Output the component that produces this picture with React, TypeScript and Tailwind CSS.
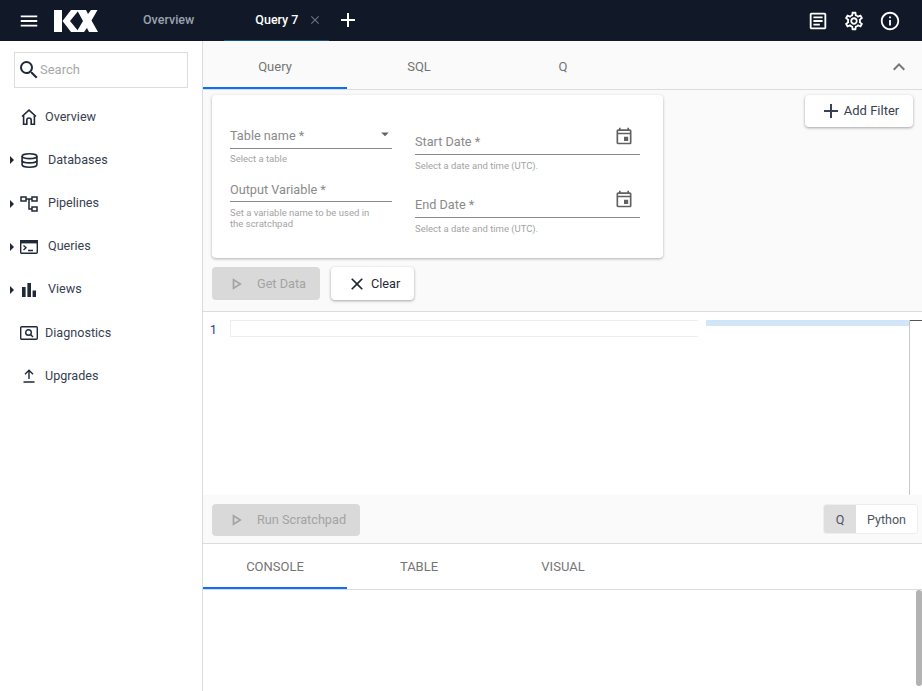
import {
  MdAdd,
  MdArrowDropDown,
  MdClose,
  MdExpandLess,
  MdMenu,
  MdOutlineArticle,
  MdOutlineEvent,
  MdOutlineInfo,
  MdOutlinePlayArrow,
  MdOutlineSettings,
  MdSearch,
} from "react-icons/md";
import type { ReactNode } from "react";

function KxLogo() {
  return (
    <svg width="44" height="22" viewBox="0 0 44 22" fill="#fff">
      <rect x="0" y="0" width="8" height="22" />
      <polygon points="17,0 25,0 16,11 25,22 17,22 8.5,11" />
      <polygon points="23,0 32,0 34,4 37,0 43.5,0 37.5,10.5 44,22 35,22 33,18 30,22 22.5,22 29,11" />
    </svg>
  );
}

function HomeIcon() {
  return (
    <svg width="16" height="16" viewBox="0 0 16 16" fill="none" stroke="#1f2937" strokeWidth="1.6">
      <path d="M1 7.5L8 1.2l7 6.3" />
      <path d="M2.6 6.5v8.7h3.2v-4a2.2 2.2 0 0 1 4.4 0v4h3.2V6.5" />
    </svg>
  );
}

function DatabaseIcon() {
  return (
    <svg width="17" height="15" viewBox="0 0 17 15" fill="none" stroke="#1f2937" strokeWidth="1.6">
      <ellipse cx="8.5" cy="3.2" rx="7.4" ry="2.4" />
      <path d="M1.1 3.2v8.6c0 1.3 3.3 2.4 7.4 2.4s7.4-1.1 7.4-2.4V3.2" />
      <path d="M1.1 7.5c0 1.3 3.3 2.4 7.4 2.4s7.4-1.1 7.4-2.4" />
    </svg>
  );
}

function PipelineIcon() {
  return (
    <svg width="18" height="16" viewBox="0 0 18 16" fill="none" stroke="#1f2937" strokeWidth="1.5">
      <rect x="1" y="1" width="5" height="4" />
      <rect x="12" y="1" width="5" height="4" />
      <rect x="12" y="11" width="5" height="4" />
      <path d="M6 3h6M9 3v10h3" />
    </svg>
  );
}

function TerminalIcon() {
  return (
    <svg width="18" height="14" viewBox="0 0 18 14" fill="none" stroke="#1f2937" strokeWidth="1.4">
      <rect x="0.7" y="0.7" width="16.6" height="12.6" rx="1" />
      <rect x="0.7" y="0.7" width="16.6" height="2" fill="#1f2937" />
      <path d="M3.5 5.5l2.5 2.3-2.5 2.3M8 10.5h5" />
    </svg>
  );
}

function ViewsIcon() {
  return (
    <svg width="14" height="14" viewBox="0 0 14 14" fill="#1f2937">
      <rect x="0" y="4" width="3.6" height="10" />
      <rect x="5.4" y="0" width="3.6" height="14" />
      <rect x="10.6" y="7.5" width="3.4" height="6.5" />
    </svg>
  );
}

function DiagnosticsIcon() {
  return (
    <svg width="18" height="14" viewBox="0 0 18 14" fill="none" stroke="#1f2937" strokeWidth="1.4">
      <rect x="0.7" y="0.7" width="16.6" height="12.6" rx="1" />
      <circle cx="8.5" cy="6.5" r="2.8" />
      <path d="M10.5 8.5l2.5 2.5" />
    </svg>
  );
}

function UploadIcon() {
  return (
    <svg width="12" height="14" viewBox="0 0 12 14" fill="none" stroke="#1f2937" strokeWidth="1.4">
      <path d="M6 10V1.5M2 5.3l4-4 4 4M0.5 13h11" />
    </svg>
  );
}

function NavItem({
  icon,
  label,
  caret,
}: {
  icon: ReactNode;
  label: string;
  caret?: boolean;
}) {
  return (
    <div className="flex h-[43.2px] items-center text-[12.6px] text-[#374151]">
      <span className="flex w-[20px] justify-end pr-[6.5px]">
        {caret ? (
          <span className="h-0 w-0 border-y-[4.5px] border-l-[4px] border-y-transparent border-l-[#1f2937]" />
        ) : null}
      </span>
      <span className="flex w-[18px] justify-center">{icon}</span>
      <span className={caret ? "ml-[10px]" : "ml-[7px]"}>{label}</span>
    </div>
  );
}

function Hint({ children }: { children: ReactNode }) {
  return <p className="mt-[4px] w-[145px] text-[9.5px] leading-[11px] text-[#a3a3a3]">{children}</p>;
}

function DateField({ label }: { label: string }) {
  return (
    <div className="h-[63px] w-[225px]">
      <div className="flex h-[37px] items-end justify-between border-b border-[#8a8a8a] pb-[3px]">
        <span className="text-[12.7px] leading-[18px] text-[#8a8a8a]">{label}</span>
        <MdOutlineEvent className="mb-[5px] mr-[6px] text-[#616161]" size={20} />
      </div>
      <p className="mt-[5px] text-[9.5px] leading-[11px] text-[#a3a3a3]">
        Select a date and time (UTC).
      </p>
    </div>
  );
}

function TabRow({
  tabs,
  className,
}: {
  tabs: string[];
  className: string;
}) {
  return (
    <div className="flex h-full">
      {tabs.map((t, i) => (
        <div
          key={t}
          className={`flex w-[144px] items-center justify-center text-[13px] text-[#757575] ${className} ${
            i === 0 ? "shadow-[inset_0_-2px_0_#0d6efd]" : ""
          }`}
        >
          {t}
        </div>
      ))}
    </div>
  );
}

export default function App() {
  return (
    <div className="flex h-[691px] w-[922px] flex-col overflow-hidden bg-white font-['Roboto',sans-serif]">
      <header className="flex h-[41px] shrink-0 items-center bg-[#111827] text-white">
        <MdMenu className="ml-[18px]" size={22} />
        <div className="ml-[14px] flex">
          <KxLogo />
        </div>
        <span className="ml-[45px] text-[12.5px] font-medium text-[#9ca3af]">Overview</span>
        <div className="ml-[30px] flex h-[40px] w-[105px] items-center border-b border-[#14508f] pl-[31px]">
          <span className="text-[12.5px] font-medium">Query 7</span>
          <MdClose className="ml-[10px] text-[#6b7280]" size={14} />
        </div>
        <MdAdd className="ml-[7px] mt-[-1px]" size={24} />
        <div className="ml-auto mr-[21px] flex items-center gap-[14px]">
          <MdOutlineArticle size={22} />
          <MdOutlineSettings size={22} />
          <MdOutlineInfo size={22} />
        </div>
      </header>

      <div className="flex min-h-0 flex-1">
        <aside className="w-[203px] shrink-0 border-r border-[#dcdcdc] bg-white">
          <div className="mx-[14px] mt-[11px] flex h-[36px] w-[174px] items-center border border-[#dcdcdc] pl-[2px]">
            <MdSearch className="text-[#1f2937]" size={24} />
            <span className="ml-[-1px] text-[13px] text-[#a8a8a8]">Search</span>
          </div>
          <div className="mt-[7.6px]">
            <NavItem icon={<HomeIcon />} label="Overview" />
            <NavItem icon={<DatabaseIcon />} label="Databases" caret />
            <NavItem icon={<PipelineIcon />} label="Pipelines" caret />
            <NavItem icon={<TerminalIcon />} label="Queries" caret />
            <NavItem icon={<ViewsIcon />} label="Views" caret />
            <NavItem icon={<DiagnosticsIcon />} label="Diagnostics" />
            <NavItem icon={<UploadIcon />} label="Upgrades" />
          </div>
        </aside>

        <main className="flex min-w-0 flex-1 flex-col">
          <div className="relative h-[49px] shrink-0 border-b border-[#dcdcdc] bg-[#fafafa]">
            <TabRow tabs={["Query", "SQL", "Q"]} className="pt-[3px]" />
            <MdExpandLess className="absolute right-[11px] top-[14px] text-[#757575]" size={24} />
          </div>

          <div className="flex h-[222px] shrink-0 items-start justify-between border-b border-[#dcdcdc] bg-[#fafafa] pl-[9px] pr-[9px] pt-[5px]">
            <div>
              <div className="flex h-[163px] w-[451px] gap-[23px] rounded-[4px] bg-white pl-[18px] pt-[27px] shadow-[0_1px_3px_rgba(0,0,0,0.3)]">
                <div className="w-[162px]">
                  <div className="flex h-[27px] items-start justify-between border-b border-[#8a8a8a]">
                    <span className="mt-[5px] text-[12.7px] leading-[18px] text-[#8a8a8a]">Table name *</span>
                    <MdArrowDropDown className="mt-[3px] mr-[-2px] text-[#616161]" size={18} />
                  </div>
                  <Hint>Select a table</Hint>
                  <div className="mt-[13px] flex h-[25px] items-start border-b border-[#8a8a8a]">
                    <span className="mt-[4px] text-[12.7px] leading-[18px] text-[#8a8a8a]">Output Variable *</span>
                  </div>
                  <div className="pt-[1px]">
                    <Hint>Set a variable name to be used in the scratchpad</Hint>
                  </div>
                </div>
                <div className="mt-[-4px]">
                  <DateField label="Start Date *" />
                  <DateField label="End Date *" />
                </div>
              </div>
              <div className="mt-[9px] flex gap-[11px]">
                <div className="flex h-[33px] w-[108px] items-center rounded-[4px] bg-[#d9d9d9] pl-[14px] text-[12.7px] text-[#a3a3a3]">
                  <MdOutlinePlayArrow size={20} />
                  <span className="ml-[11px]">Get Data</span>
                </div>
                <div className="flex h-[33px] w-[83px] items-center rounded-[4px] bg-white pl-[16px] text-[12.7px] text-[#1f2937] shadow-[0_1px_3px_rgba(0,0,0,0.35)]">
                  <MdClose size={20} />
                  <span className="ml-[4px]">Clear</span>
                </div>
              </div>
            </div>
            <div className="flex h-[32px] w-[108px] items-center justify-center rounded-[4px] bg-white text-[13px] text-[#374151] shadow-[0_1px_3px_rgba(0,0,0,0.35)]">
              <MdAdd className="text-[#374151]" size={24} />
              <span className="ml-[1px]">Add Filter</span>
            </div>
          </div>

          <div className="relative flex h-[183px] shrink-0 bg-white pt-[8px]">
            <span className="ml-[7px] mt-px w-[20px] text-[12px] leading-[18px] text-[#1c3a7a]">1</span>
            <div className="h-[17px] w-[468px] border-y border-l border-[#eeeeee]" />
            <div className="ml-[8px] h-[6px] w-[203px] bg-[#d2e6fa]" />
            <div className="absolute bottom-0 right-[12px] top-[8px] w-px bg-[#c8c8c8]" />
            <div className="absolute right-0 top-[8px] h-px w-[12px] bg-[#555555]" />
          </div>

          <div className="flex h-[49px] shrink-0 items-start justify-between border-b border-[#dcdcdc] bg-[#fafafa] pl-[9px] pr-[4px] pt-[9px]">
            <div className="flex h-[32px] w-[148px] items-center rounded-[4px] bg-[#d9d9d9] pl-[14px] text-[12.7px] text-[#a3a3a3]">
              <MdOutlinePlayArrow size={20} />
              <span className="ml-[11px]">Run Scratchpad</span>
            </div>
            <div className="flex h-[30px] w-[95px] overflow-hidden rounded-[3px] border border-[#eeeeee] bg-white text-[12.5px] text-[#4b5563]">
              <span className="flex w-[32px] items-center justify-center bg-[#dedede] pt-[2px]">Q</span>
              <span className="flex flex-1 items-center justify-center pt-[2px]">Python</span>
            </div>
          </div>

          <div className="h-[46px] shrink-0 border-b border-[#dcdcdc] bg-white">
            <TabRow tabs={["CONSOLE", "TABLE", "VISUAL"]} className="" />
          </div>

          <div className="relative min-h-0 flex-1 bg-white">
            <div className="absolute right-0 top-0 h-[96px] w-[6px] rounded-[3px] bg-[#b3b3b3]" />
          </div>
        </main>
      </div>
    </div>
  );
}
